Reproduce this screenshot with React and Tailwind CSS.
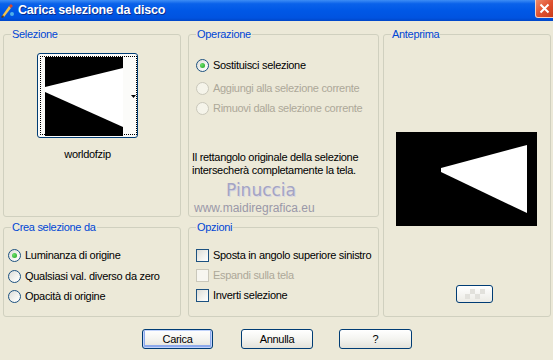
import React from "react";

function Radio({ checked, disabled }) {
  return (
    <span
      className={
        "relative flex h-[13px] w-[13px] shrink-0 items-center justify-center rounded-full border " +
        (disabled
          ? "border-[#CAC8BB] bg-[#F5F4EA]"
          : "border-[#1C5180] bg-[linear-gradient(135deg,#DCDCD7_0%,#F5F5F1_60%,#FFFFFF_100%)]")
      }
    >
      {checked && (
        <span className="h-[5px] w-[5px] rounded-full bg-[radial-gradient(circle_at_35%_35%,#6BE06A,#21A121)]" />
      )}
    </span>
  );
}

function Check({ disabled }) {
  return (
    <span
      className={
        "h-[13px] w-[13px] shrink-0 border " +
        (disabled
          ? "border-[#CAC8BB] bg-[#F7F6F0]"
          : "border-[#1C5180] bg-[linear-gradient(135deg,#DCDCD7_0%,#F3F3EF_60%,#FFFFFF_100%)]")
      }
    />
  );
}

function Row({ children, label, disabled, className = "" }) {
  return (
    <div className={"flex h-[20px] items-center gap-[4px] whitespace-nowrap " + className}>
      {children}
      <span className={disabled ? "text-[#ACA899]" : "text-black"}>{label}</span>
    </div>
  );
}

function Group({ title, className = "", children }) {
  return (
    <fieldset className={"rounded-[3px] border border-[#D0D0BF] " + className}>
      <legend className="ml-[7px] px-[1px] leading-[13px] text-[#0046D5]">{title}</legend>
      {children}
    </fieldset>
  );
}

function XpButton({ children, primary, className = "" }) {
  return (
    <button
      className={
        "h-[20px] rounded-[3px] border border-[#003C74] bg-[linear-gradient(to_bottom,#FFFFFF_0%,#F4F4F0_50%,#E3E2DA_100%)] text-[11px] leading-none text-black " +
        (primary ? "shadow-[inset_0_0_0_1px_#C1D3FB,inset_0_-1px_0_2px_#8DA9EC] " : "") +
        className
      }
    >
      {children}
    </button>
  );
}

export default function App() {
  return (
    <div className="h-[360px] w-[553px] overflow-hidden bg-[#ECE9D8] font-['Liberation_Sans',Arial,sans-serif] text-[11px] tracking-[-0.3px] text-black">
      {/* title bar */}
      <div className="flex h-[21px] items-center bg-[linear-gradient(to_bottom,#3D8DF5_0%,#0A62EA_18%,#0058E6_50%,#0053E0_85%,#0046C8_100%)]">
        <svg width="16" height="16" viewBox="0 0 16 16">
          <path d="M2 13 L9 3 L11 5 L4 14 Z" fill="#F2C14E" />
          <path d="M9 3 L11 1 L13 3 L11 5 Z" fill="#D9472B" />
          <path d="M1 14 L3 12 L4 14 L2 15 Z" fill="#5A3A1A" />
          <circle cx="12" cy="11" r="2" fill="#4FB0E8" />
        </svg>
        <span className="ml-[2px] text-[12.5px] font-bold tracking-[-0.2px] text-white [text-shadow:1px_1px_0_#0A2C8C]">
          Carica selezione da disco
        </span>
        <div className="ml-auto mr-[-3px] flex h-[18px] w-[21px] items-center justify-center self-start rounded-b-[3px] border border-t-0 border-[#F4D0C4] bg-[linear-gradient(135deg,#F08A6A_0%,#E0502E_50%,#C63A1A_100%)] pr-[3px]">
          <svg width="11" height="11" viewBox="0 0 11 11">
            <path d="M1.5 1.5 L9.5 9.5 M9.5 1.5 L1.5 9.5" stroke="white" strokeWidth="2" />
          </svg>
        </div>
      </div>

      {/* body */}
      <div className="flex pl-[3px] pt-[7px]">
        <div className="flex w-[178px] flex-col gap-[4px]">
          <Group title="Selezione" className="h-[189px]">
            <div className="ml-[33px] mt-[12px] flex h-[85px] w-[101px] rounded-[3px] border border-[#003C74] bg-[#FBFBF9] p-[2px]">
              <div className="flex flex-1 border border-dotted border-black pl-[4px]">
                <svg width="91" height="79" viewBox="0 0 91 79">
                  <rect x="0" y="0" width="78" height="79" fill="black" />
                  <polygon points="0,30 78,11 78,70 0,35" fill="white" />
                  <polygon points="86,38 91,38 88.5,41" fill="black" />
                </svg>
              </div>
            </div>
            <div className="ml-[33px] mt-[10px] w-[101px] text-center leading-[13px]">worldofzip</div>
          </Group>
          <Group title="Crea selezione da" className="h-[96px]">
            <div className="ml-[4px] mt-[11px]">
              <Row label="Luminanza di origine">
                <Radio checked />
              </Row>
              <Row label="Qualsiasi val. diverso da zero" className="mt-[1px]">
                <Radio />
              </Row>
              <Row label="Opacità di origine">
                <Radio />
              </Row>
            </div>
          </Group>
        </div>

        <div className="ml-[7px] flex w-[191px] flex-col gap-[4px]">
          <Group title="Operazione" className="h-[189px]">
            <div className="ml-[7px] mt-[14px]">
              <Row label="Sostituisci selezione">
                <Radio checked />
              </Row>
              <Row label="Aggiungi alla selezione corrente" disabled className="mt-[3px]">
                <Radio disabled />
              </Row>
              <Row label="Rimuovi dalla selezione corrente" disabled>
                <Radio disabled />
              </Row>
            </div>
            <p className="ml-[3px] mt-[33px] whitespace-nowrap leading-[13px]">
              Il rettangolo originale della selezione
              <br />
              intersecherà completamente la tela.
            </p>
            <div className="ml-[37px] mt-[4px] font-['DejaVu_Sans',sans-serif] text-[17px] leading-[18px] tracking-normal text-[#A4A4C4] [text-shadow:1px_1px_0_#D8D6E2]">
              Pinuccia
            </div>
            <div className="ml-[5px] mt-[2px] text-[12px] leading-[14px] tracking-normal text-[#9A98A8]">www.maidiregrafica.eu</div>
          </Group>
          <Group title="Opzioni" className="h-[96px]">
            <div className="ml-[7px] mt-[11px]">
              <Row label="Sposta in angolo superiore sinistro">
                <Check />
              </Row>
              <Row label="Espandi sulla tela" disabled>
                <Check disabled />
              </Row>
              <Row label="Inverti selezione">
                <Check />
              </Row>
            </div>
          </Group>
        </div>

        <Group title="Anteprima" className="ml-[4px] h-[289px] w-[168px]">
          <svg width="141" height="94" viewBox="0 0 141 94" className="ml-[12px] mt-[91px]">
            <rect x="0" y="0" width="141" height="94" fill="black" />
            <polygon points="45,36 131,13 131,81 45,40" fill="white" />
          </svg>
          <button className="ml-[72px] mt-[59px] flex h-[18px] w-[37px] items-center justify-center rounded-[3px] border border-[#003C74] bg-[linear-gradient(to_bottom,#FFFFFF,#ECEBE5)]">
            <svg width="20" height="10" viewBox="0 0 20 10">
              <rect x="0" y="5" width="5" height="5" fill="#E2E1DC" />
              <rect x="5" y="0" width="5" height="5" fill="#E2E1DC" />
              <rect x="10" y="5" width="5" height="5" fill="#E2E1DC" />
              <rect x="15" y="0" width="5" height="5" fill="#E2E1DC" />
            </svg>
          </button>
        </Group>
      </div>

      {/* buttons */}
      <div className="mt-[12px] flex pl-[142px]">
        <XpButton primary className="w-[71px]">Carica</XpButton>
        <XpButton className="ml-[28px] w-[72px]">Annulla</XpButton>
        <XpButton className="ml-[26px] w-[73px]">?</XpButton>
      </div>
    </div>
  );
}
